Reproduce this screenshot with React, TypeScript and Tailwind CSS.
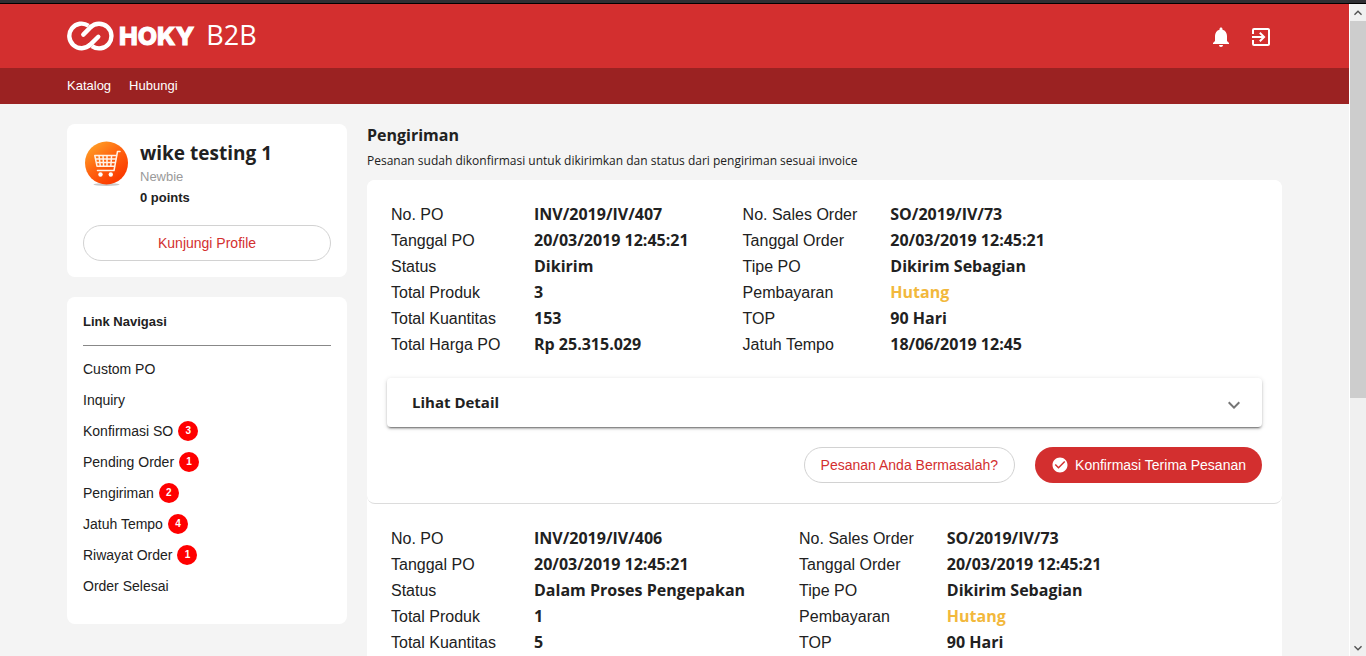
import { MdCheckCircle, MdExitToApp, MdKeyboardArrowDown, MdKeyboardArrowUp, MdNotifications } from "react-icons/md";

type Row = { label: string; value: string; highlight?: boolean };
type Order = { left: Row[]; right: Row[] };

const links: { label: string; count?: number }[] = [
  { label: "Custom PO" },
  { label: "Inquiry" },
  { label: "Konfirmasi SO", count: 3 },
  { label: "Pending Order", count: 1 },
  { label: "Pengiriman", count: 2 },
  { label: "Jatuh Tempo", count: 4 },
  { label: "Riwayat Order", count: 1 },
  { label: "Order Selesai" },
];

const orders: Order[] = [
  {
    left: [
      { label: "No. PO", value: "INV/2019/IV/407" },
      { label: "Tanggal PO", value: "20/03/2019 12:45:21" },
      { label: "Status", value: "Dikirim" },
      { label: "Total Produk", value: "3" },
      { label: "Total Kuantitas", value: "153" },
      { label: "Total Harga PO", value: "Rp 25.315.029" },
    ],
    right: [
      { label: "No. Sales Order", value: "SO/2019/IV/73" },
      { label: "Tanggal Order", value: "20/03/2019 12:45:21" },
      { label: "Tipe PO", value: "Dikirim Sebagian" },
      { label: "Pembayaran", value: "Hutang", highlight: true },
      { label: "TOP", value: "90 Hari" },
      { label: "Jatuh Tempo", value: "18/06/2019 12:45" },
    ],
  },
  {
    left: [
      { label: "No. PO", value: "INV/2019/IV/406" },
      { label: "Tanggal PO", value: "20/03/2019 12:45:21" },
      { label: "Status", value: "Dalam Proses Pengepakan" },
      { label: "Total Produk", value: "1" },
      { label: "Total Kuantitas", value: "5" },
    ],
    right: [
      { label: "No. Sales Order", value: "SO/2019/IV/73" },
      { label: "Tanggal Order", value: "20/03/2019 12:45:21" },
      { label: "Tipe PO", value: "Dikirim Sebagian" },
      { label: "Pembayaran", value: "Hutang", highlight: true },
      { label: "TOP", value: "90 Hari" },
    ],
  },
];

function Logo() {
  return (
    <a href="#" className="flex items-center pb-px text-white">
      <svg width="47" height="30" viewBox="0 0 47 30" fill="none" stroke="currentColor" strokeWidth="4.4">
        <path d="M21.500 4.700A12.300 12.300 0 1 0 23.200 23.700" />
        <path d="M25 25.100A12.300 12.300 0 1 0 23.500 6.300" />
        <path d="M22.800 24.100L31.300 15.800M23.900 5.900L16.300 13.600" strokeLinecap="round" />
      </svg>
      <span className="ml-[5px] font-['Inter',sans-serif] text-[25px] leading-8 font-extrabold [-webkit-text-stroke:1px_white] [stroke-linejoin:round]">HOKY</span>
      <span className="ml-3 pb-0.5 font-['Open_Sans',sans-serif] text-[27px] leading-8">B2B</span>
    </a>
  );
}

function Avatar() {
  return (
    <svg className="shrink-0" width="48" height="48" viewBox="0 0 48 48" role="img" aria-label="Profile">
      <defs>
        <linearGradient id="disc" x1="0.1" y1="0.1" x2="0.7" y2="0.9">
          <stop offset="0" stopColor="#ff9f26" />
          <stop offset="0.5" stopColor="#ff6410" />
          <stop offset="1" stopColor="#fb3c00" />
        </linearGradient>
      </defs>
      <ellipse cx="23.500" cy="44.500" rx="13" ry="1.500" fill="#c8c8c8" />
      <circle cx="23.500" cy="23" r="21.500" fill="url(#disc)" />
      <g fill="none" stroke="#fff3e8" strokeWidth="1.500" strokeLinecap="round" strokeLinejoin="round">
        <path d="M37 11.500h-2.500L31 30.500H14.500" />
        <path d="M33.500 15.500H11.800L14 26.200h17.500M12.500 19h20.300M13.200 22.600h19M16 15.500l1.300 10.700M20 15.500l.6 10.700M24 15.500v10.700M28.600 15.500l-.8 10.700" />
      </g>
      <circle cx="17.500" cy="34.500" r="2.200" fill="#fff" />
      <circle cx="27.800" cy="34.500" r="2.200" fill="#fff" />
    </svg>
  );
}

function DetailTable({ rows }: { rows: Row[] }) {
  return (
    <table className="text-left text-base">
      <tbody>
        {rows.map((row) => (
          <tr key={row.label} className="h-[26px]">
            <th scope="row" className="min-w-[143px] py-0 pr-[33px] align-baseline leading-6 font-normal whitespace-nowrap">{row.label}</th>
            <td className={row.highlight ? "py-0 align-baseline font-['Open_Sans',sans-serif] leading-[26px] font-bold whitespace-nowrap text-[#f2b83c]" : "py-0 align-baseline font-['Open_Sans',sans-serif] leading-[26px] font-bold whitespace-nowrap"}>
              {row.value}
            </td>
          </tr>
        ))}
      </tbody>
    </table>
  );
}

function OrderCard({ order }: { order: Order }) {
  return (
    <article className="rounded-lg border-b border-[#dcdcdc] bg-white px-5 pt-[21px] pb-5">
      <div className="flex gap-[54px] px-1">
        <DetailTable rows={order.left} />
        <DetailTable rows={order.right} />
      </div>
      <button
        type="button"
        className="mt-[21px] flex h-[49px] w-full items-center justify-between rounded bg-white pr-4 pl-[25px] text-left font-['Open_Sans',sans-serif] text-[15px] font-bold shadow-[0_3px_1px_-2px_rgba(0,0,0,0.3),0_2px_2px_0_rgba(0,0,0,0.2),0_1px_5px_0_rgba(0,0,0,0.14)]"
      >
        Lihat Detail
        <MdKeyboardArrowDown className="mt-1 size-6 text-[#757575]" />
      </button>
      <div className="mt-5 flex justify-end gap-5">
        <button type="button" className="h-9 rounded-full border border-[#d2d2d2] bg-white px-4 text-sm text-[#d32f2f]">
          Pesanan Anda Bermasalah?
        </button>
        <button type="button" className="flex h-9 items-center gap-1.5 rounded-full bg-[#d32f2f] px-4 text-sm text-white">
          <MdCheckCircle className="size-[18px]" />
          Konfirmasi Terima Pesanan
        </button>
      </div>
    </article>
  );
}

function ScrollRail() {
  return (
    <div aria-hidden="true" className="flex w-[17px] shrink-0 flex-col border-l border-white bg-[#f0f0f0]">
      <div className="flex h-[17px] items-center justify-center text-[#505050]">
        <MdKeyboardArrowUp className="size-4" />
      </div>
      <div className="flex min-h-0 flex-1 flex-col">
        <div className="h-[61%] bg-[#cdcdcd]" />
      </div>
      <div className="flex h-[17px] items-center justify-center text-[#505050]">
        <MdKeyboardArrowDown className="size-4" />
      </div>
    </div>
  );
}

export default function App() {
  return (
    <div className="flex h-screen flex-col overflow-hidden bg-[#f4f4f4] font-['Liberation_Sans',Arial,sans-serif] text-[#212121]">
      <div className="h-1 shrink-0 border-b border-black bg-[#2f2f33]" />
      <div className="flex min-h-0 flex-1">
        <div className="min-w-0 flex-1 overflow-hidden">
          <header>
            <div className="flex h-16 items-center justify-between bg-[#d32f2f] pr-[76px] pl-[67px]">
              <Logo />
              <div className="flex gap-4 pt-0.5 text-white">
                <button type="button" aria-label="Notifikasi"><MdNotifications className="size-6" /></button>
                <button type="button" aria-label="Keluar"><MdExitToApp className="size-6" /></button>
              </div>
            </div>
            <nav className="flex h-9 items-center gap-[18px] bg-[#9b2222] px-[67px] text-[13px] text-white">
              <a href="#">Katalog</a>
              <a href="#">Hubungi</a>
            </nav>
          </header>
          <div className="flex items-start gap-5 px-[67px] pt-5">
            <aside className="flex w-[280px] shrink-0 flex-col gap-5">
              <section className="rounded-lg bg-white p-4">
                <div className="flex gap-[9px]">
                  <Avatar />
                  <div>
                    <h2 className="font-['Open_Sans',sans-serif] text-[19px] leading-[26px] font-bold">wike testing 1</h2>
                    <p className="text-[13px] leading-[21px] text-[#9a9a9a]">Newbie</p>
                    <p className="text-[13px] leading-[21px] font-bold">0 points</p>
                  </div>
                </div>
                <button type="button" className="mt-[17px] h-9 w-full rounded-full border border-[#d2d2d2] text-sm text-[#d32f2f]">
                  Kunjungi Profile
                </button>
              </section>
              <nav className="rounded-lg bg-white px-4 pt-4 pb-[23px]">
                <h3 className="border-b border-[#888888] pb-[15px] text-[13px] leading-[17px] font-bold">Link Navigasi</h3>
                <ul className="mt-[7px] text-sm">
                  {links.map((link) => (
                    <li key={link.label}>
                      <a href="#" className="flex h-[31px] items-center gap-[5px]">
                        {link.label}
                        {link.count !== undefined && (
                          <span className="flex size-5 items-center justify-center rounded-full bg-[#ff0000] pt-0.5 text-[10px] font-bold text-white">{link.count}</span>
                        )}
                      </a>
                    </li>
                  ))}
                </ul>
              </nav>
            </aside>
            <main className="min-w-0 flex-1">
              <h1 className="font-['Open_Sans',sans-serif] text-base leading-[22px] font-bold">Pengiriman</h1>
              <p className="mt-[7px] mb-[11px] font-['Open_Sans',sans-serif] text-xs leading-4">
                Pesanan sudah dikonfirmasi untuk dikirimkan dan status dari pengiriman sesuai invoice
              </p>
              <div className="rounded-lg bg-white">
                {orders.map((order) => (
                  <OrderCard key={order.left[0].value} order={order} />
                ))}
              </div>
            </main>
          </div>
        </div>
        <ScrollRail />
      </div>
    </div>
  );
}
